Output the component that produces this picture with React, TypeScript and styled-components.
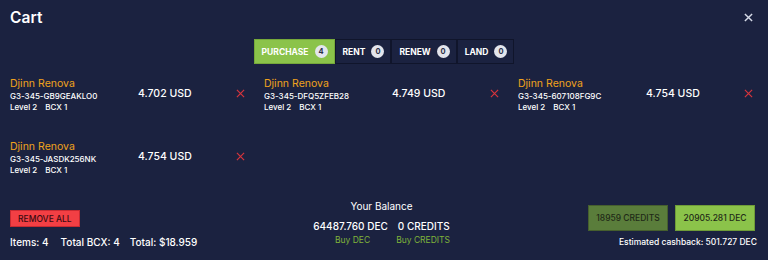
import styled, { createGlobalStyle } from 'styled-components';

const GlobalStyle = createGlobalStyle`
	* { box-sizing: border-box; }
	body {
		margin: 0;
		background: #1b2240;
		font-family: Inter, 'Noto Sans', sans-serif;
		color: #ffffff;
	}
`;

type Item = { id: string; price: string };

const items: Item[] = [
	{ id: 'G3-345-GB9GEAKLO0', price: '4.702 USD' },
	{ id: 'G3-345-DFQ5ZFEB28', price: '4.749 USD' },
	{ id: 'G3-345-607108FG9C', price: '4.754 USD' },
	{ id: 'G3-345-JASDK256NK', price: '4.754 USD' },
];

const tabs = [
	{ label: 'PURCHASE', count: 4 },
	{ label: 'RENT', count: 0 },
	{ label: 'RENEW', count: 0 },
	{ label: 'LAND', count: 0 },
];

function App() {
	return (
		<>
			<GlobalStyle />
			<StyledModal>
				<StyledHeader>
					<StyledTitle>Cart</StyledTitle>
					<StyledClose aria-label='close'>
						<svg width='9' height='9' viewBox='0 0 10 10'>
							<path d='M1 1L9 9M9 1L1 9' stroke='#d6dbe8' strokeWidth='1.6' />
						</svg>
					</StyledClose>
				</StyledHeader>
				<StyledTabs>
					{tabs.map((t, i) => (
						<StyledTab key={t.label} $active={i === 0}>
							{t.label}
							<StyledBadge>{t.count}</StyledBadge>
						</StyledTab>
					))}
				</StyledTabs>
				<StyledGrid>
					{items.map((item) => (
						<StyledItem key={item.id}>
							<StyledInfo>
								<StyledName>Djinn Renova</StyledName>
								<StyledId>{item.id}</StyledId>
								<StyledMeta>
									<span>Level 2</span>
									<span>BCX 1</span>
								</StyledMeta>
							</StyledInfo>
							<StyledPrice>{item.price}</StyledPrice>
							<StyledRemove aria-label='remove'>
								<svg width='9' height='9' viewBox='0 0 10 10'>
									<path d='M1 1L9 9M9 1L1 9' stroke='#d8343c' strokeWidth='1.3' />
								</svg>
							</StyledRemove>
						</StyledItem>
					))}
				</StyledGrid>
				<StyledFooter>
					<StyledLeft>
						<StyledRemoveAll>REMOVE ALL</StyledRemoveAll>
						<StyledTotals>
							<span>Items: 4</span>
							<span>Total BCX: 4</span>
							<span>Total: $18.959</span>
						</StyledTotals>
					</StyledLeft>
					<StyledBalance>
						<StyledBalanceTitle>Your Balance</StyledBalanceTitle>
						<StyledBalanceRow>
							<span>64487.760 DEC</span>
							<span>0 CREDITS</span>
						</StyledBalanceRow>
						<StyledBuyRow>
							<StyledBuy>Buy DEC</StyledBuy>
							<StyledBuy>Buy CREDITS</StyledBuy>
						</StyledBuyRow>
					</StyledBalance>
					<StyledRight>
						<StyledPayRow>
							<StyledPay $variant='dark'>18959 CREDITS</StyledPay>
							<StyledPay $variant='bright'>20905.281 DEC</StyledPay>
						</StyledPayRow>
						<StyledCashback>Estimated cashback: 501.727 DEC</StyledCashback>
					</StyledRight>
				</StyledFooter>
			</StyledModal>
		</>
	);
}

const StyledModal = styled.main`
	width: 768px;
	height: 260px;
	padding: 6px 10px 0 10px;
	display: flex;
	flex-direction: column;
`;

const StyledHeader = styled.header`
	display: flex;
	justify-content: space-between;
	align-items: center;
	height: 22px;
`;

const StyledTitle = styled.h2`
	margin: 0;
	font-size: 15.5px;
	font-weight: 600;
	letter-spacing: 0.1px;
`;

const StyledClose = styled.button`
	background: none;
	border: none;
	padding: 0;
	margin-right: 5px;
	display: flex;
	cursor: pointer;
`;

const StyledTabs = styled.nav`
	display: flex;
	justify-content: center;
	margin-top: 11px;
`;

const StyledTab = styled.button<{ $active?: boolean }>`
	height: 25px;
	padding: 0 6px 0 7px;
	display: flex;
	align-items: center;
	gap: 6px;
	font-family: Inter, sans-serif;
	font-size: 8.5px;
	font-weight: 700;
	color: #ffffff;
	background: ${(p) => (p.$active ? '#8bc34a' : '#1b2240')};
	border: 1.5px solid ${(p) => (p.$active ? '#76a93a' : '#10152b')};
	cursor: pointer;
`;

const StyledBadge = styled.span`
	width: 13px;
	height: 13px;
	border-radius: 50%;
	background: #e3e5ec;
	color: #2a2f45;
	font-size: 7.5px;
	font-weight: 700;
	display: flex;
	align-items: center;
	justify-content: center;
`;

const StyledGrid = styled.section`
	display: grid;
	grid-template-columns: repeat(3, 240px);
	column-gap: 14px;
	row-gap: 19px;
	margin-top: 13px;
`;

const StyledItem = styled.article`
	display: grid;
	grid-template-columns: 128px 1fr 14px;
	align-items: start;
	height: 44px;
`;

const StyledInfo = styled.div`
	display: flex;
	flex-direction: column;
`;

const StyledName = styled.div`
	color: #f0a21c;
	font-size: 10.5px;
	line-height: 13px;
`;

const StyledId = styled.div`
	font-size: 8px;
	font-weight: 500;
	line-height: 10px;
	margin-top: 1px;
`;

const StyledMeta = styled.div`
	display: flex;
	gap: 8px;
	font-size: 8px;
	font-weight: 500;
	line-height: 10px;
	margin-top: 1px;
`;

const StyledPrice = styled.div`
	font-size: 10.5px;
	font-weight: 500;
	margin-top: 10px;
`;

const StyledRemove = styled.button`
	background: none;
	border: none;
	padding: 0;
	margin-top: 12px;
	display: flex;
	cursor: pointer;
`;

const StyledFooter = styled.footer`
	margin-top: auto;
	display: grid;
	grid-template-columns: 1fr 1fr 1fr;
	align-items: end;
	padding-bottom: 12px;
`;

const StyledLeft = styled.div`
	display: flex;
	flex-direction: column;
	gap: 9px;
	align-items: flex-start;
`;

const StyledRemoveAll = styled.button`
	background: #f23f44;
	border: 1px solid #c82a31;
	color: #3a0b10;
	font-family: Inter, sans-serif;
	font-size: 8.5px;
	font-weight: 500;
	padding: 0 7px;
	height: 17px;
	cursor: pointer;
`;

const StyledTotals = styled.div`
	display: flex;
	gap: 12px;
	font-size: 10px;
	font-weight: 500;
	line-height: 12px;
	& span:last-child {
		margin-left: -2px;
	}
`;

const StyledBalance = styled.div`
	display: flex;
	flex-direction: column;
	align-items: center;
	padding-right: 5px;
`;

const StyledBalanceTitle = styled.div`
	font-size: 10px;
	line-height: 12px;
`;

const StyledBalanceRow = styled.div`
	display: flex;
	gap: 10px;
	font-size: 10px;
	font-weight: 500;
	margin-top: 8px;
	line-height: 12px;
`;

const StyledBuyRow = styled.div`
	display: flex;
	gap: 26px;
	font-size: 8.5px;
	margin-top: 3px;
	line-height: 11px;
	padding-left: 22px;
	margin-bottom: 2px;
`;

const StyledBuy = styled.a`
	color: #7fb33a;
	cursor: pointer;
`;

const StyledRight = styled.div`
	display: flex;
	flex-direction: column;
	align-items: flex-end;
	gap: 6px;
	padding-right: 1px;
`;

const StyledPayRow = styled.div`
	display: flex;
	gap: 7px;
	padding-right: 2px;
`;

const StyledPay = styled.button<{ $variant: 'dark' | 'bright' }>`
	height: 26px;
	width: 80px;
	font-family: Inter, sans-serif;
	font-size: 8.5px;
	font-weight: 500;
	color: #1f2a17;
	background: ${(p) => (p.$variant === 'bright' ? '#8bc34a' : '#5a7d3b')};
	border: 1px solid ${(p) => (p.$variant === 'bright' ? '#6f9c38' : '#465f2e')};
	cursor: pointer;
`;

const StyledCashback = styled.div`
	font-size: 8.5px;
	font-weight: 500;
	line-height: 11px;
`;

export default App;
